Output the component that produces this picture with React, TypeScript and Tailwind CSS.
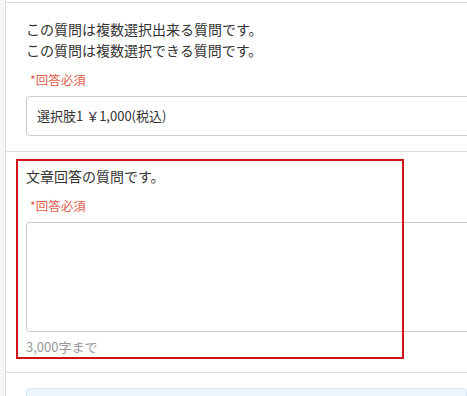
import React from 'react';

const RequiredLabel: React.FC = () => (
  <div className="mt-[10px] pl-[4px] text-[12.5px] leading-[18px] text-[#e0604f]">*回答必須</div>
);

const App: React.FC = () => {
  return (
    <div
      className="relative flex h-[396px] w-full overflow-hidden bg-white text-[#333]"
      style={{ fontFamily: '"Noto Sans CJK JP", "Noto Sans", sans-serif' }}
    >
      {/* left gutter */}
      <div className="w-[5px] shrink-0 bg-[#f6f6f6]" />

      <div className="flex-1 border-l border-[#dddddd]">
        <div className="h-[3px] border-b border-[#dddddd]" />

        {/* multiple choice question */}
        <section className="border-b border-[#dddddd] pl-5 pt-[16px] pb-[15px]">
          <p className="text-[14px] leading-[21px]">この質問は複数選択出来る質問です。</p>
          <p className="text-[14px] leading-[21px]">この質問は複数選択できる質問です。</p>
          <RequiredLabel />
          <div className="mt-[7px] -mr-[20px] flex h-[40px] items-center rounded-[4px] border border-[#cccccc] pl-[10px] text-[13px]">
            選択肢1 ￥1,000(税込)
          </div>
        </section>

        {/* text answer question */}
        <section className="border-b border-[#dddddd] pl-5 pt-[14px] pb-[16px]">
          <p className="text-[14px] leading-[21px]">文章回答の質問です。</p>
          <RequiredLabel />
          <textarea className="mt-[7px] block h-[110px] w-[calc(100%+20px)] resize-none rounded-[4px] border border-[#cccccc]" />
          <div className="mt-[5px] text-[13px] leading-[19px] text-[#999999]">3,000字まで</div>
        </section>

        <div className="pl-5 pt-[15px]">
          <div className="h-[40px] rounded-[4px] border border-[#d6e8f7] bg-[#eef6fd]" />
        </div>
      </div>

      {/* highlight annotation */}
      <div className="pointer-events-none absolute left-[16px] top-[159px] h-[200px] w-[388px] border-2 border-[#d0121b]" />
    </div>
  );
};

export default App;
